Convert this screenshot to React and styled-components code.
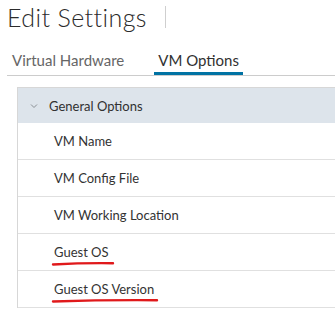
import React from 'react';
import styled, { createGlobalStyle } from 'styled-components';

const GlobalStyle = createGlobalStyle`
  html, body {
    margin: 0;
    padding: 0;
    background: #fff;
    overflow: hidden;
  }
  body {
    font-family: Lato, "Open Sans", sans-serif;
    color: #313131;
  }
`;

const Page = styled.div`
  width: 335px;
  height: 311px;
  overflow: hidden;
`;

const TitleBar = styled.div`
  display: flex;
  align-items: center;
  height: 34px;
  padding-left: 7px;
`;

const Title = styled.h1`
  margin: 0;
  font-size: 25px;
  font-weight: 300;
  color: #2b2b2b;
  letter-spacing: 0.4px;
`;

const Divider = styled.div`
  width: 1px;
  height: 22px;
  background: #cfcfcf;
  margin-left: 18px;
`;

const Tabs = styled.div`
  display: flex;
  margin: 11px 0 0 7px;
  border-bottom: 1px solid #cccccc;
  height: 30px;
`;

const Tab = styled.div`
  padding: 6px 4px 0;
  margin-right: 26px;
  font-size: 15px;
  color: ${(p) => (p.$active ? '#313131' : '#666')};
  box-shadow: ${(p) => (p.$active ? 'inset 0 -3px 0 #0072a3' : 'none')};
  &:first-child {
    padding-left: 5px;
  }
`;

const Panel = styled.div`
  margin: 11px 0 0 17px;
  border-top: 1px solid #d7d7d7;
  border-left: 1px solid #d7d7d7;
`;

const Header = styled.div`
  display: flex;
  align-items: center;
  height: 35px;
  background: #dde4eb;
  padding-left: 12px;
  font-size: 13px;
  color: #313131;
`;

const Chevron = styled.svg`
  width: 8px;
  height: 8px;
  margin-right: 11px;
`;

const Row = styled.div`
  display: flex;
  align-items: center;
  height: 36px;
  border-bottom: 1px solid #e0e0e0;
  padding-left: 36px;
  font-size: 13px;
  color: #333;
`;

const Label = styled.span`
  position: relative;
`;

const Mark = styled.svg`
  position: absolute;
  left: -2px;
  top: 17px;
  height: 6px;
  overflow: visible;
`;

const rows = [
  { name: 'VM Name' },
  { name: 'VM Config File' },
  { name: 'VM Working Location' },
  { name: 'Guest OS', mark: 62 },
  { name: 'Guest OS Version', mark: 106 },
];

export default function App() {
  return (
    <Page>
      <GlobalStyle />
      <TitleBar>
        <Title>Edit Settings</Title>
        <Divider />
      </TitleBar>
      <Tabs>
        <Tab>Virtual Hardware</Tab>
        <Tab $active>VM Options</Tab>
      </Tabs>
      <Panel>
        <Header>
          <Chevron viewBox="0 0 8 8">
            <path d="M1 2.5 L4 5.5 L7 2.5" fill="none" stroke="#8a8f94" strokeWidth="1" />
          </Chevron>
          General Options
        </Header>
        {rows.map((r) => (
          <Row key={r.name}>
            <Label>
              {r.name}
              {r.mark && (
                <Mark width={r.mark} viewBox={`0 0 ${r.mark} 6`}>
                  <path
                    d={`M1 3.5 Q ${r.mark * 0.5} 1.8 ${r.mark - 1} 2.2`}
                    fill="none"
                    stroke="#e0191b"
                    strokeWidth="2.4"
                    strokeLinecap="round"
                  />
                </Mark>
              )}
            </Label>
          </Row>
        ))}
      </Panel>
    </Page>
  );
}
